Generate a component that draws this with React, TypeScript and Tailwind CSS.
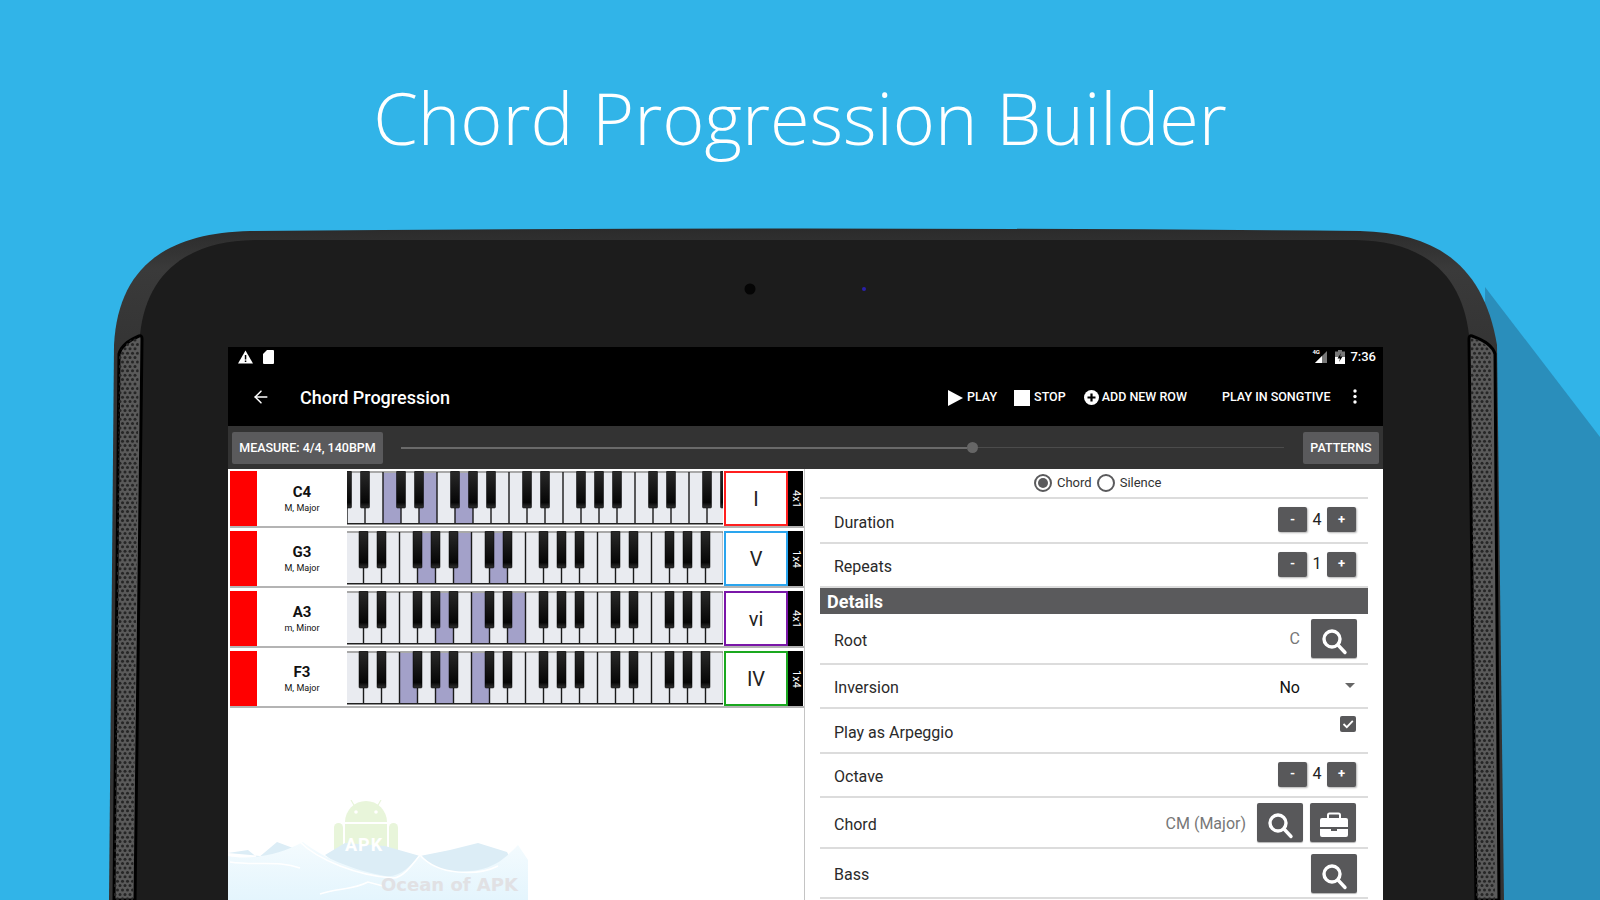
import { ArrowLeft } from 'lucide-react'

const row1Blacks = [0, 1, 3, 4, 6, 7, 8, 10, 11, 13, 14, 15, 17, 18, 20, 21]
const rowBlacks = [1, 2, 4, 5, 6, 8, 9, 11, 12, 13, 15, 16, 18, 19, 20]

const chords = [
  { name: 'C4', kind: 'M, Major', numeral: 'I', tag: '4x1', border: 'border-[#ff1f1f]', offset: 0, blacks: row1Blacks, active: [2, 4, 6] },
  { name: 'G3', kind: 'M, Major', numeral: 'V', tag: '1x4', border: 'border-[#2aa5ee]', offset: -1.5, blacks: rowBlacks, active: [4, 6, 8] },
  { name: 'A3', kind: 'm, Minor', numeral: 'vi', tag: '4x1', border: 'border-[#7a16a8]', offset: -1.5, blacks: rowBlacks, active: [5, 7, 9] },
  { name: 'F3', kind: 'M, Major', numeral: 'IV', tag: '1x4', border: 'border-[#1aa81f]', offset: -1.5, blacks: rowBlacks, active: [3, 5, 7] },
]

function Keyboard({ offset, blacks, active }: { offset: number; blacks: number[]; active: number[] }) {
  const keys = Array.from({ length: 22 }, (_, i) => i)
  return (
    <svg width="376" height="55" viewBox="0 0 376 55" className="shrink-0">
      <defs>
        <linearGradient id="blackKey" x1="0" x2="0" y1="0" y2="1">
          <stop offset="0" stopColor="#2a2a2a" />
          <stop offset="0.85" stopColor="#060606" />
          <stop offset="1" stopColor="#333" />
        </linearGradient>
      </defs>
      <rect width="376" height="55" fill="#ffffff" />
      {keys.map((k) => (
        <rect key={k} x={offset + 18 * k} y="0" width="18" height="52" fill={active.includes(k) ? '#a3a1c9' : '#e9ebf0'} />
      ))}
      <rect width="376" height="2" fill="#a8a8a8" />
      {keys.map((k) => (
        <rect
          key={k}
          x={offset + 18 * k - 0.7}
          y={blacks.includes(k) ? 36 : 1}
          width="1.4"
          height={blacks.includes(k) ? 16 : 51}
          fill="#1a1a1a"
        />
      ))}
      <rect y="52" width="376" height="1.5" fill="#222" />
      {blacks.map((b) => (
        <rect key={b} x={offset + 18 * b - 4.5} y="0" width="9" height="37" rx="1" fill="url(#blackKey)" stroke="#000" strokeWidth="0.5" />
      ))}
    </svg>
  )
}

function ChordRow({ chord }: { chord: (typeof chords)[number] }) {
  return (
    <div className="mb-[3px]">
      <div className="flex h-[55px] items-stretch">
        <div className="w-[27px] shrink-0 bg-[#ff0000]" />
        <div className="flex w-[90px] shrink-0 flex-col items-center justify-center text-[#111]">
          <div className="text-[15px] font-bold leading-[18px]">{chord.name}</div>
          <div className="text-[9px] leading-[14px]">{chord.kind}</div>
        </div>
        <Keyboard offset={chord.offset} blacks={chord.blacks} active={chord.active} />
        <div className={`ml-px flex w-[64px] shrink-0 items-center justify-center border-2 bg-white text-[20px] text-[#222] ${chord.border}`}>
          {chord.numeral}
        </div>
        <div className="flex w-[15px] shrink-0 items-center justify-center bg-black text-[11px] text-white [writing-mode:vertical-rl]">
          {chord.tag}
        </div>
      </div>
      <div className="h-[2px] bg-[#b4b4b4]" />
    </div>
  )
}

function SearchIcon() {
  return (
    <svg width="46" height="39" viewBox="0 0 46 39">
      <circle cx="21" cy="20" r="8" fill="none" stroke="#fff" strokeWidth="3.4" />
      <path d="M27 26 L34 33.5" stroke="#fff" strokeWidth="3.4" strokeLinecap="round" />
    </svg>
  )
}

function IconButton({ children }: { children: React.ReactNode }) {
  return <div className="h-[39px] w-[46px] shrink-0 rounded-[2px] bg-[#58585a] shadow-[0_1px_1px_rgba(0,0,0,0.3)]">{children}</div>
}

function StepButton({ label }: { label: string }) {
  return (
    <div className="flex h-[25px] w-[29px] items-center justify-center rounded-[2px] bg-[#58585a] text-[13px] font-bold text-white shadow-[1px_1px_2px_rgba(0,0,0,0.3)]">
      {label}
    </div>
  )
}

function Stepper({ value }: { value: string }) {
  return (
    <div className="flex -translate-y-[1px] items-center">
      <StepButton label="-" />
      <span className="w-[20px] text-center text-[16px] text-[#222]">{value}</span>
      <StepButton label="+" />
    </div>
  )
}

function DetailRow({ label, h, children }: { label: string; h: string; children?: React.ReactNode }) {
  return (
    <div className={`flex items-center justify-between border-b-2 border-[#dcdcdc] pl-[14px] pr-[12px] ${h}`}>
      <span className="translate-y-[2px] text-[16px] text-[#2a2a2a]">{label}</span>
      <div className="flex items-center">{children}</div>
    </div>
  )
}

function Radio({ checked }: { checked?: boolean }) {
  return (
    <div className="flex h-[18px] w-[18px] items-center justify-center rounded-full border-2 border-[#5a5a5c]">
      {checked && <div className="h-[10px] w-[10px] rounded-full bg-[#5a5a5c]" />}
    </div>
  )
}

function Watermark() {
  return (
    <div className="pointer-events-none absolute bottom-0 left-0 h-[100px] w-[300px]">
      <svg width="300" height="100" viewBox="0 0 300 100">
        <defs>
          <linearGradient id="sea" x1="0" x2="0" y1="0" y2="1">
            <stop offset="0" stopColor="#f4fbfe" />
            <stop offset="1" stopColor="#e4f5fd" />
          </linearGradient>
        </defs>
        <path d="M117 22 a21 21 0 0 1 42 0 Z" fill="#e8f5da" />
        <path d="M117 24 H159 V48 L138 58 L117 48 Z" fill="#e8f5da" />
        <rect x="106" y="23" width="9" height="34" rx="4.5" fill="#e8f5da" />
        <rect x="161" y="23" width="9" height="34" rx="4.5" fill="#e8f5da" />
        <path d="M127 7 L123 0 M149 7 L153 0" stroke="#e8f5da" strokeWidth="1.2" />
        <circle cx="128" cy="12" r="1.8" fill="#fff" />
        <circle cx="148" cy="12" r="1.8" fill="#fff" />
        <path d="M0 53 L20 50 L30 58 L49 42 L65 48 L75 60 Z" fill="#dcedf6" />
        <path d="M97 55 L117 43 L157 46 L192 56 L222 50 L250 43 L279 52 L288 70 L130 80 Z" fill="#dcedf6" />
        <path d="M0 56 C20 60 50 56 75 42 C95 58 125 70 157 76 C172 78 182 66 192 55 C205 70 225 74 250 70 C270 66 280 55 290 45 L300 60 V100 H0 Z" fill="url(#sea)" />
        <path d="M2 62 C30 66 50 60 72 68 M72 42 C90 60 130 76 165 78 C175 78 185 64 192 55 M92 94 C110 88 125 90 140 82 L155 86 M192 55 C210 76 250 76 270 66" stroke="#fff" strokeWidth="1.5" fill="none" />
      </svg>
      <span className="absolute left-[117px] top-[31px] text-[18px] font-bold tracking-[1px] text-white">APK</span>
      <span className="absolute left-[153px] top-[74px] font-['DejaVu_Sans',sans-serif] text-[18px] font-bold leading-[22px] text-[#e1e1e4]">
        Ocean of APK
      </span>
    </div>
  )
}

function Device() {
  const dots: { x: number; y: number }[] = []
  for (let r = 0; r < 130; r++) {
    for (let c = 0; c < 5; c++) dots.push({ x: c * 5 + (r % 2 ? 2.5 : 0), y: r * 4.4 })
  }
  return (
    <svg className="absolute inset-0" width="1600" height="900" viewBox="0 0 1600 900">
      <defs>
        <clipPath id="grillL"><path d="M114 900 L119 354 Q122 343 139 336 L133 900 Z" /></clipPath>
        <clipPath id="grillR"><path d="M1476 900 L1470 336 Q1488 343 1491 354 L1495 900 Z" /></clipPath>
        <linearGradient id="rim" x1="0" x2="0" y1="0" y2="1">
          <stop offset="0" stopColor="#2b2b2b" />
          <stop offset="0.06" stopColor="#3a3a3a" />
          <stop offset="0.2" stopColor="#333" />
        </linearGradient>
      </defs>
      <path d="M1485 287 L1600 437 V900 H1490 Z" fill="#2a8ebb" />
      <path d="M109 900 L114 345 C118 268 165 233 250 231 Q800 226 1360 231 C1440 233 1484 268 1497 345 L1504 900 Z" fill="url(#rim)" />
      <path d="M135 900 L140 335 C146 275 185 241 255 240 H1355 C1425 241 1462 275 1469 335 L1476 900 Z" fill="#1c1c1c" />
      <circle cx="750" cy="289" r="5.5" fill="#050505" />
      <circle cx="864" cy="289" r="2" fill="#2a20a8" />
      <path d="M114 900 L119 354 Q122 343 139 336 Q142 335 142 339 L135 900 Z" fill="#5a5a5a" stroke="#000" strokeWidth="3" />
      <path d="M1476 900 L1469 339 Q1469 335 1472 336 Q1492 343 1495 354 L1499 900 Z" fill="#5a5a5a" stroke="#000" strokeWidth="3" />
      <g clipPath="url(#grillL)" fill="#262626">
        {dots.map((d, i) => <circle key={i} cx={115 + d.x} cy={340 + d.y} r="1.5" />)}
      </g>
      <g clipPath="url(#grillR)" fill="#262626">
        {dots.map((d, i) => <circle key={i} cx={1472 + d.x} cy={340 + d.y} r="1.5" />)}
      </g>
    </svg>
  )
}

export default function App() {
  return (
    <div className="relative h-[900px] w-[1600px] overflow-hidden bg-[#31b4e8] font-['Roboto',sans-serif]">
      <Device />

      <div className="relative flex h-[229px] items-center justify-center pt-[4px]">
        <h1 className="font-['Open_Sans',sans-serif] text-[72px] font-light leading-none text-white">Chord Progression Builder</h1>
      </div>

      <div className="relative ml-[228px] mt-[118px] w-[1155px] bg-white">
        {/* status bar */}
        <div className="flex h-[20px] items-center bg-black pl-[10px] pr-[7px] text-white">
          <svg width="15" height="14" viewBox="0 0 15 14">
            <path d="M7.5 0.5 L15 13.5 H0 Z" fill="#fff" />
            <rect x="6.8" y="5" width="1.5" height="4.5" fill="#000" />
            <rect x="6.8" y="10.5" width="1.5" height="1.5" fill="#000" />
          </svg>
          <svg width="11" height="14" viewBox="0 0 11 14" className="ml-[10px]">
            <path d="M4 0 H10 Q11 0 11 1 V13 Q11 14 10 14 H1 Q0 14 0 13 V4 Z" fill="#fff" />
          </svg>
          <div className="ml-auto flex items-center">
            <div className="relative h-[14px] w-[16px]">
              <svg width="16" height="14" viewBox="0 0 16 14">
                <path d="M15 1 V13 H3 Z" fill="#777" />
                <path d="M10 6 V13 H3 Z" fill="#fff" />
              </svg>
              <span className="absolute -top-[2px] left-0 text-[6px] font-bold leading-[8px]">4G</span>
            </div>
            <svg width="10" height="14" viewBox="0 0 10 14" className="ml-[7px]">
              <rect x="3" y="0" width="4" height="2" fill="#777" />
              <rect y="1.5" width="10" height="12.5" fill="#777" />
              <rect y="7" width="10" height="7" fill="#fff" />
              <path d="M6 3 L2.5 8.5 H5 L4 12 L7.5 6.5 H5 Z" fill="#000" />
            </svg>
            <span className="ml-[5px] text-[13px] font-medium">7:36</span>
          </div>
        </div>

        {/* toolbar */}
        <div className="flex h-[59px] items-center bg-black pt-[2px] text-[12.5px] font-medium text-white">
          <ArrowLeft className="ml-[23px] -translate-y-[1px]" size={20} strokeWidth={1.8} />
          <span className="ml-[29px] text-[18px]">Chord Progression</span>
          <svg width="15" height="16" viewBox="0 0 15 16" className="ml-[498px]">
            <path d="M0 0 L15 8 L0 16 Z" fill="#fff" />
          </svg>
          <span className="ml-[4px]">PLAY</span>
          <div className="ml-[17px] h-[16px] w-[16px] bg-white" />
          <span className="ml-[4px]">STOP</span>
          <svg width="15" height="15" viewBox="0 0 15 15" className="ml-[18px]">
            <circle cx="7.5" cy="7.5" r="7.5" fill="#fff" />
            <path d="M7.5 3.5 V11.5 M3.5 7.5 H11.5" stroke="#000" strokeWidth="2.2" />
          </svg>
          <span className="ml-[3px]">ADD NEW ROW</span>
          <span className="ml-[35px]">PLAY IN SONGTIVE</span>
          <svg width="4" height="15" viewBox="0 0 4 15" className="ml-[22px] -translate-y-[1px]">
            <circle cx="2" cy="2" r="1.7" fill="#fff" />
            <circle cx="2" cy="7.5" r="1.7" fill="#fff" />
            <circle cx="2" cy="13" r="1.7" fill="#fff" />
          </svg>
        </div>

        {/* measure bar */}
        <div className="flex h-[43px] items-center bg-[#333333] pl-[4px] pr-[4px] text-[12.5px] font-medium text-white">
          <div className="flex h-[32px] w-[151px] items-center justify-center rounded-[2px] bg-[#5a5a5c] pt-px">MEASURE: 4/4, 140BPM</div>
          <div className="ml-[18px] flex w-[883px] items-center">
            <div className="h-[2px] w-[566px] bg-[#6a6a6a]" />
            <div className="h-[11px] w-[11px] rounded-full bg-[#666]" />
            <div className="h-px flex-1 bg-[#4c4c4c]" />
          </div>
          <div className="ml-auto flex h-[32px] w-[76px] items-center justify-center rounded-[2px] bg-[#5a5a5c] pt-px">PATTERNS</div>
        </div>

        {/* main */}
        <div className="flex h-[431px]">
          <div className="relative h-full w-[577px] shrink-0 border-r border-[#c4c4c4] pl-[2px] pt-[2px]">
            {chords.map((c) => (
              <ChordRow key={c.name} chord={c} />
            ))}
            <Watermark />
          </div>

          <div className="ml-[15px] w-[548px] shrink-0">
            <div className="flex h-[30px] items-center border-b-2 border-[#dcdcdc] pl-[214px] text-[13px] text-[#333]">
              <Radio checked />
              <span className="ml-[5px]">Chord</span>
              <span className="ml-[5px]"><Radio /></span>
              <span className="ml-[5px]">Silence</span>
            </div>
            <DetailRow label="Duration" h="h-[45px]"><Stepper value="4" /></DetailRow>
            <DetailRow label="Repeats" h="h-[44px]"><Stepper value="1" /></DetailRow>
            <div className="flex h-[26px] items-center bg-[#5a5a5c] pl-[7px] text-[18px] font-bold text-white">Details</div>
            <DetailRow label="Root" h="h-[51px]">
              <span className="mr-[11px] text-[16px] text-[#777]">C</span>
              <div className="-mr-px"><IconButton><SearchIcon /></IconButton></div>
            </DetailRow>
            <DetailRow label="Inversion" h="h-[44px]">
              <span className="translate-y-[2px] text-[16px] text-[#111]">No</span>
              <svg width="10" height="5" viewBox="0 0 10 5" className="ml-[45px] mr-[1px] -translate-y-[1px]">
                <path d="M0 0 H10 L5 5 Z" fill="#666" />
              </svg>
            </DetailRow>
            <DetailRow label="Play as Arpeggio" h="h-[45px]">
              <svg width="16" height="16" viewBox="0 0 16 16" className="-translate-y-[7px]">
                <rect width="16" height="16" rx="2" fill="#58585a" />
                <path d="M3.5 8 L6.8 11.2 L12.8 4.8" stroke="#fff" strokeWidth="1.8" fill="none" />
              </svg>
            </DetailRow>
            <DetailRow label="Octave" h="h-[44px]"><Stepper value="4" /></DetailRow>
            <DetailRow label="Chord" h="h-[51px]">
              <span className="mr-[11px] translate-y-[1px] text-[16px] text-[#777]">CM (Major)</span>
              <IconButton><SearchIcon /></IconButton>
              <div className="ml-[7px]">
                <IconButton>
                  <svg width="46" height="39" viewBox="0 0 46 39">
                    <path d="M18 15 V12 Q18 10.5 19.5 10.5 H28.5 Q30 10.5 30 12 V15" fill="none" stroke="#fff" strokeWidth="2" />
                    <path d="M10 17 Q10 15 12 15 H36 Q38 15 38 17 V24 H10 Z" fill="#fff" />
                    <path d="M10 26 H21 V28 H27 V26 H38 V32 Q38 34 36 34 H12 Q10 34 10 32 Z" fill="#fff" />
                  </svg>
                </IconButton>
              </div>
            </DetailRow>
            <DetailRow label="Bass" h="h-[50px]">
              <div className="-mr-px"><IconButton><SearchIcon /></IconButton></div>
            </DetailRow>
          </div>
        </div>
      </div>
    </div>
  )
}
